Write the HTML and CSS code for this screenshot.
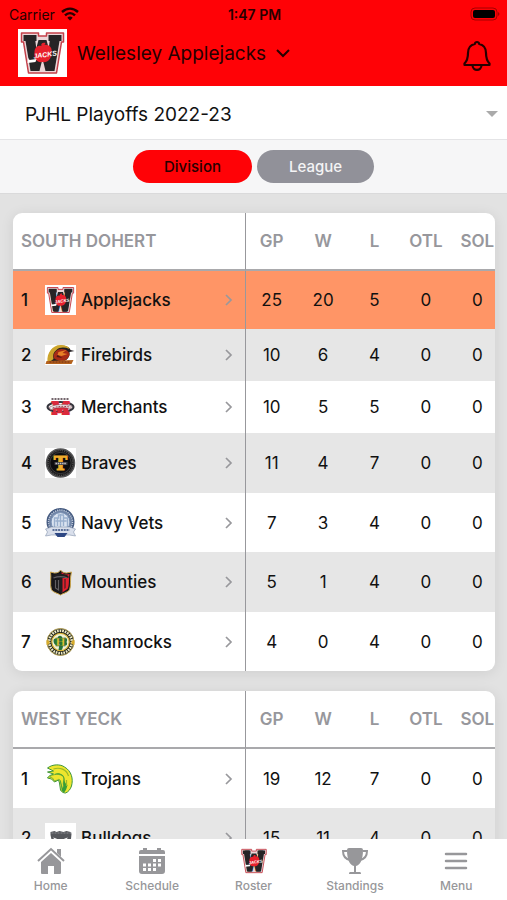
FILE: index.html
```html
<!DOCTYPE html>
<html lang="en">
<head>
    <meta charset="UTF-8">
    <meta name="viewport" content="width=device-width, initial-scale=1">
    <title>Wellesley Applejacks - Roster</title>
    <link rel="stylesheet" href="styles.css">
</head>
<body>
<!-- shared team logos -->
<svg class="sprite" aria-hidden="true">
    <symbol id="jacks" viewBox="0 0 48 48">
        <path d="M3 4h17v3h8V4h17v9h-2l-5 31H10L5 13H3z" fill="#ecd6d8" stroke="#c4404a" stroke-width="1.500" stroke-linejoin="round"/>
        <path d="M5 6h13v6H5zM30 6h13v6H30zM7 12h9l4 30h-8zM32 12h9l-5 30h-8zM20 11h8l3 11H17z" fill="#262426"/>
        <text x="24" y="41" fill="#262426" stroke="#262426" stroke-width="2" font-family="Liberation Mono" font-weight="bold" font-size="50" text-anchor="middle">W</text>
        <path d="M23 17c-1-2 1-4 4-3l-1 2c5-1 8 3 7 8 0 6-4 10-9 9-6 1-9-4-8-10 0-4 3-7 7-6z" fill="#e8202c"/>
        <path d="M10 29l1 2 7-1-1 3-8 1z" fill="#fff"/>
        <text x="27" y="28" fill="#fff" font-family="Liberation Sans" font-weight="bold" font-style="italic" font-size="7" text-anchor="middle" transform="rotate(-8 27 28)">JACKS</text>
    </symbol>
    <symbol id="firebirds" viewBox="0 0 30 20">
        <path d="M3 16C2 10 5 2 14 1c6-1 10 1 11 4l4 1-5 1c1 5-3 9-8 10z" fill="#211d20"/>
        <path d="M2 17C1 8 7 0 15 0c4 0 8 1 9 4-5-2-10-2-13 1-3 2-4 5-3 9l-4 3z" fill="#cda52c"/>
        <path d="M8 12c0-5 4-8 8-8 5 0 8 3 8 6-1 3-4 6-8 6-4-1-7-1-8-4z" fill="#a72b16"/>
        <path d="M13 7l8-2-4 3 5 1-6 2-4-1z" fill="#e78127"/>
        <path d="M12 10l5 3-6-1z" fill="#4e1714"/>
        <path d="M1 16l27-1-2 4H0z" fill="#b3611c"/>
        <path d="M4 17h21" stroke="#702b17" stroke-dasharray="2 1"/>
    </symbol>
    <symbol id="merchants" viewBox="0 0 30 20">
        <ellipse cx="15" cy="10" rx="13" ry="5" fill="none" stroke="#34343c" stroke-width="2"/>
        <text x="15" y="17" fill="#db2a3b" stroke="#db2a3b" stroke-width="2" font-family="DejaVu Serif" font-weight="bold" font-size="16" text-anchor="middle">M</text>
        <path d="M6 2h18" stroke="#45333c" stroke-width="1.500" stroke-dasharray="2 1"/>
        <path d="M4 10c7-3 16-3 22-1l-1 3c-6-2-14-2-20 1z" fill="#eee" stroke="#7d3a44" stroke-width=".5"/>
        <path d="M7 11c6-2 11-2 17-1" stroke="#9e4450" fill="none" stroke-width="1" stroke-dasharray="2 1"/>
    </symbol>
    <symbol id="braves" viewBox="0 0 30 30">
        <circle cx="15" cy="15" r="14" fill="#1b1a1b" stroke="#555556" stroke-width="1.500"/>
        <circle cx="15" cy="15" r="12.400" fill="none" stroke="#666" stroke-width="1" stroke-dasharray="1.200 1"/>
        <circle cx="15" cy="15" r="10.600" fill="#0d0d0f" stroke="#515153" stroke-width=".6"/>
        <text x="15" y="22" fill="#efab2d" stroke="#efab2d" font-family="DejaVu Serif" font-weight="bold" font-size="18" text-anchor="middle">T</text>
        <path d="M9 14h13v3H9z" fill="#413f43"/>
        <path d="M10 15.500h11" stroke="#c3c3c7" stroke-width="1.500" stroke-dasharray="1.500 .7"/>
    </symbol>
    <symbol id="navyvets" viewBox="0 0 30 30">
        <circle cx="15" cy="14" r="13" fill="#7185a6" stroke="#43597f" stroke-width="2"/>
        <circle cx="15" cy="14" r="12" fill="none" stroke="#cad3e2" stroke-width="1.400" stroke-dasharray="1 1.200"/>
        <circle cx="15" cy="14" r="9.400" fill="#dbe4f1" stroke="#7a91b5"/>
        <path d="M9 19V10h4V7h5v3h4v9M15 6v14M10 13h11M12 10v8M18 10v8" stroke="#99afcd" stroke-width="1.400" fill="none"/>
        <path d="M0 21l6-2h18l6 2-2 3 2 4-6-1H6l-6 1 2-4z" fill="#d9dfeb" stroke="#8494ad" stroke-width=".6"/>
        <path d="M7 22h17" stroke="#5a6f98" stroke-width="2.200" stroke-dasharray="2 .8"/>
        <path d="M9 25h13l-3 4h-7z" fill="#2d4783"/>
    </symbol>
    <symbol id="mounties" viewBox="0 0 30 30">
        <path d="M5 5l4 1c3 0 5-1 6-3 1 2 4 3 6 3l5-1c-2 7 0 13-2 18-3 3-6 3-9 5-3-2-6-2-9-5C4 17 6 11 5 5z" fill="#18171a" stroke="#c8a34c"/>
        <path d="M16 5c2 2 5 3 8 2-1 6 0 12-2 15l-6 4z" fill="#df202d"/>
        <path d="M7 9c6-3 11-3 16 0v2H7zM14 11h3v15l-3-1zM19 12h1v9l-1 1z" fill="#211e20"/>
        <path d="M8 11c5-2 9-2 14 0M10 13v8l3 2V13" fill="none" stroke="#615e61" stroke-width="1.200"/>
    </symbol>
    <symbol id="shamrocks" viewBox="0 0 30 30">
        <circle cx="15" cy="15" r="13.500" fill="#171c19" stroke="#b9a558"/>
        <circle cx="15" cy="15" r="11.300" fill="none" stroke="#eee9c2" stroke-width="2.600" stroke-dasharray="1.700 .9"/>
        <circle cx="15" cy="15" r="8.700" fill="#f3f1d6" stroke="#d6b237" stroke-width="1.200"/>
        <path d="M8 14c0-3 3-3 4-1-1-5 5-6 5-1 3-3 6 0 4 3 2 3-1 5-4 2 1 3 0 5-1 6h-3l1-6c-3 3-6 0-6-3z" fill="#26743b"/>
        <text x="15" y="19" fill="#e5ca35" stroke="#285c32" stroke-width=".4" font-family="DejaVu Serif" font-weight="bold" font-size="11" text-anchor="middle">H</text>
        <path d="M1 13l3 1v3l-3 1zM29 13l-3 1v3l3 1z" fill="#d7ab2a"/>
    </symbol>
    <symbol id="trojans" viewBox="0 0 30 30">
        <path d="M2 4C7 0 15 0 19 3c7 4 9 12 7 19-1 3-3 6-6 7-2 0-4-1-5-3l-1-7-1-3-4 2-3-3-4-1c1-2 3-3 6-4L2 8l6-1z" fill="#eee52e" stroke="#3d963d" stroke-width="1"/>
        <path d="M9 10c5-2 10 1 10 5 0 3 1 5 3 6-1 4-2 6-3 7-3 0-3-2-3-4l-2-9z" fill="#369f38"/>
        <path d="M4 13c3-3 11-4 14 0 1 3-1 5 0 9l-1 3-2-8c-1-2-2-2-3-1l-3 1-2-3z" fill="#eee52e" stroke="#3d963d" stroke-width=".6"/>
        <path d="M8 5c6-2 13 0 15 7M21 16v6" fill="none" stroke="#9ab827" stroke-width="1.200"/>
    </symbol>
    <symbol id="bulldogs" viewBox="0 0 30 30">
        <path d="M5 12V9l4-1 2 1 3-1 4 1 3-1 4 1 1 2-1 10-9 7-9-7z" fill="#55575c"/>
        <path d="M6 10h20" stroke="#8b8c90" stroke-dasharray="2 1"/>
        <path d="M8 15l5 2M22 15l-5 2M10 21h10" stroke="#fff"/>
    </symbol>
    <symbol id="more" viewBox="0 0 10 14">
        <path d="M2 2l5 5-5 5" fill="none" stroke="#98989c" stroke-width="1.700"/>
    </symbol>
</svg>

<header class="top">
    <div class="status">
        <span class="carrier">Carrier
            <svg width="18" height="14" viewBox="0 0 18 14" aria-hidden="true">
                <path d="M1 5c5-4.500 11-4.500 16 0M4 8.300c3-2.900 7-2.900 10 0" fill="none" stroke="#260000" stroke-width="2.400"/>
                <path d="M6.300 10.700c1.600-1.500 3.800-1.500 5.400 0L9 13.500z" fill="#260000"/>
            </svg>
        </span>
        <time>1:47 PM</time>
        <svg class="battery" width="30" height="14" viewBox="0 0 30 14" aria-hidden="true">
            <rect x="1" y="1" width="26" height="12" rx="4" fill="none" stroke="#a50000" stroke-width="1"/>
            <rect x="3" y="3" width="22" height="8" rx="2"/>
            <path d="M28 5c2 1 2 3 0 4z" fill="#a50000"/>
        </svg>
    </div>
    <div class="team-bar">
        <button class="team-pick" type="button">
            <svg class="badge" viewBox="0 0 48 48" aria-hidden="true"><use href="#jacks"/></svg>
            Wellesley Applejacks
            <svg width="14" height="9" viewBox="0 0 14 9" aria-hidden="true"><path d="M1 1l6 6 6-6" fill="none" stroke="#260000" stroke-width="2"/></svg>
        </button>
        <button class="bell" type="button" aria-label="Notifications">
            <svg width="28" height="32" viewBox="0 0 28 32" fill="none" stroke="#260000" stroke-width="2.200" stroke-linejoin="round" aria-hidden="true">
                <path d="M14 2c-1.500 0-2 1-2.200 2C7 5 5 9 5 13c0 6-1 8-3.500 10.500V25h25v-1.500C24 21 23 19 23 13c0-4-2-8-6.800-9C16 3 15.500 2 14 2z"/>
                <path d="M9.500 25c0 6.500 9 6.500 9 0"/>
            </svg>
        </button>
    </div>
</header>

<div class="season">
    <select aria-label="Season">
        <option>PJHL Playoffs 2022-23</option>
    </select>
</div>

<div class="switch">
    <button class="on" type="button">Division</button>
    <button type="button">League</button>
</div>

<main>
    <section class="card">
        <table>
            <thead>
                <tr><th class="name">SOUTH DOHERT</th><th>GP</th><th>W</th><th>L</th><th>OTL</th><th>SOL</th></tr>
            </thead>
            <tbody>
                <tr class="mine"><td class="name"><a href="#"><span>1</span><svg class="logo boxed"><use href="#jacks"/></svg><b>Applejacks</b><svg class="more"><use href="#more"/></svg></a></td><td>25</td><td>20</td><td>5</td><td>0</td><td>0</td></tr>
                <tr class="short"><td class="name"><a href="#"><span>2</span><svg class="logo flat boxed"><use href="#firebirds"/></svg><b>Firebirds</b><svg class="more"><use href="#more"/></svg></a></td><td>10</td><td>6</td><td>4</td><td>0</td><td>0</td></tr>
                <tr class="short"><td class="name"><a href="#"><span>3</span><svg class="logo flat"><use href="#merchants"/></svg><b>Merchants</b><svg class="more"><use href="#more"/></svg></a></td><td>10</td><td>5</td><td>5</td><td>0</td><td>0</td></tr>
                <tr><td class="name"><a href="#"><span>4</span><svg class="logo boxed"><use href="#braves"/></svg><b>Braves</b><svg class="more"><use href="#more"/></svg></a></td><td>11</td><td>4</td><td>7</td><td>0</td><td>0</td></tr>
                <tr><td class="name"><a href="#"><span>5</span><svg class="logo"><use href="#navyvets"/></svg><b>Navy Vets</b><svg class="more"><use href="#more"/></svg></a></td><td>7</td><td>3</td><td>4</td><td>0</td><td>0</td></tr>
                <tr><td class="name"><a href="#"><span>6</span><svg class="logo"><use href="#mounties"/></svg><b>Mounties</b><svg class="more"><use href="#more"/></svg></a></td><td>5</td><td>1</td><td>4</td><td>0</td><td>0</td></tr>
                <tr><td class="name"><a href="#"><span>7</span><svg class="logo"><use href="#shamrocks"/></svg><b>Shamrocks</b><svg class="more"><use href="#more"/></svg></a></td><td>4</td><td>0</td><td>4</td><td>0</td><td>0</td></tr>
            </tbody>
        </table>
    </section>
    <section class="card">
        <table>
            <thead>
                <tr><th class="name">WEST YECK</th><th>GP</th><th>W</th><th>L</th><th>OTL</th><th>SOL</th></tr>
            </thead>
            <tbody>
                <tr><td class="name"><a href="#"><span>1</span><svg class="logo"><use href="#trojans"/></svg><b>Trojans</b><svg class="more"><use href="#more"/></svg></a></td><td>19</td><td>12</td><td>7</td><td>0</td><td>0</td></tr>
                <tr><td class="name"><a href="#"><span>2</span><svg class="logo boxed"><use href="#bulldogs"/></svg><b>Bulldogs</b><svg class="more"><use href="#more"/></svg></a></td><td>15</td><td>11</td><td>4</td><td>0</td><td>0</td></tr>
            </tbody>
        </table>
    </section>
</main>

<nav class="tabs">
    <a href="#">
        <svg viewBox="0 0 28 28" aria-hidden="true">
            <path d="M1 14L14 2l13 12" fill="none" stroke="#97979a" stroke-width="2"/>
            <path d="M20 2h4v8l-4-4zM4 15L14 6l10 9v11q0 1-1 1h-6v-8h-6v8H5q-1 0-1-1z"/>
        </svg>
        Home
    </a>
    <a href="#">
        <svg viewBox="0 0 28 28" aria-hidden="true">
            <path d="M1 7V5q0-2 2-2h2V1h4v2h10V1h4v2h2q2 0 2 2v2zM1 9h26v15q0 3-3 3H4q-3 0-3-3z"/>
            <path d="M15 12h3v3h-3zM20 12h3v3h-3zM5 16.500h3v3H5zM10 16.500h3v3h-3zM15 16.500h3v3h-3zM20 16.500h3v3h-3zM5 21h3v3H5zM10 21h3v3h-3zM15 21h3v3h-3z" fill="#fff"/>
        </svg>
        Schedule
    </a>
    <a href="#">
        <svg viewBox="0 0 48 48" aria-hidden="true"><use href="#jacks"/></svg>
        Roster
    </a>
    <a href="#">
        <svg viewBox="0 0 28 28" aria-hidden="true">
            <path d="M6 4H2c0 5 2 8 7 9M22 4h4c0 5-2 8-7 9" fill="none" stroke="#97979a" stroke-width="2"/>
            <path d="M6 3q0-2 2-2h12q2 0 2 2c0 10-3 15-7 16v6h4q1 0 1 2H8q0-2 1-2h4v-6C9 18 6 13 6 3z"/>
        </svg>
        Standings
    </a>
    <a href="#">
        <svg viewBox="0 0 28 28" aria-hidden="true"><path d="M4 7h20M4 14h20M4 21h20" stroke="#97979a" stroke-width="2.500" stroke-linecap="round"/></svg>
        Menu
    </a>
</nav>
</body>
</html>
```
FILE: styles.css
```css
* { margin: 0; padding: 0; box-sizing: border-box; }
body { display: flex; flex-direction: column; height: 100vh; overflow: hidden; background: #e2e2e2; color: #111; font-family: Inter, "Liberation Sans", sans-serif; font-size: 16px; }
button, select { font: inherit; border: none; background: none; color: inherit; }
a { color: inherit; text-decoration: none; }
svg { display: block; flex: none; }
.sprite { position: absolute; width: 0; height: 0; }

/* red header */
.top { flex: none; background: #ff0206; color: #260000; }
.status { display: grid; grid-template-columns: 1fr auto 1fr; align-items: center; height: 28px; padding: 0 7px 0 9px; font-size: 14px; }
.status time { font-weight: 600; }
.carrier { display: flex; align-items: center; gap: 6px; }
.battery { justify-self: end; }
.team-bar { display: flex; align-items: center; justify-content: space-between; height: 58px; padding: 0 16px 8px 18px; }
.team-pick { display: flex; align-items: center; gap: 10px; font-size: 19px; }
.badge { width: 49px; height: 48px; background: #fff; }
.bell { padding-top: 6px; }

.season { flex: none; height: 54px; background: #fff; border-bottom: 1px solid #e4e4e6; display: flex; align-items: center; position: relative; }
.season select { appearance: none; width: 100%; height: 100%; padding: 3px 25px 0; font-size: 19px; }
.season::after { content: ""; position: absolute; right: 9px; top: 25px; border: 6px solid transparent; border-top-color: #aaa; border-bottom: none; pointer-events: none; }

.switch { flex: none; display: flex; justify-content: center; gap: 5px; height: 54px; padding: 10px 0; background: #f6f6f7; border-bottom: 1px solid #dadadb; }
.switch button { width: 117px; height: 33px; border-radius: 17px; background: #919199; color: #f4f4f5; font-size: 15px; font-weight: 500; }
.switch .on { width: 119px; background: #ff0206; color: #260000; }

/* standings */
main { flex: 1; min-height: 0; overflow: auto; scrollbar-width: none; padding: 19px 12px 20px 13px; }
.card { overflow: hidden; background: #fff; border-radius: 9px; margin-bottom: 20px; box-shadow: 0 2px 14px rgba(0,0,0,.09); }
/* the last stat column runs a little past the card */
table { width: calc(100% + 8px); table-layout: fixed; border-collapse: separate; border-spacing: 0; font-size: 17px; }
th { height: 58px; border-bottom: 2px solid #a9a9ac; color: #97979c; font-weight: 600; text-align: center; }
td { height: 59px; text-align: center; }
tbody tr:nth-child(even) { background: #e6e6e6; }
tbody tr:nth-child(even) td { height: 60px; }
tbody .mine { background: #ff9566; }
tbody .mine td { height: 58px; }
tbody .short td, tbody .short:nth-child(even) td { height: 52px; }
.name { width: 233px; padding-left: 8px; border-right: 1px solid #98989c; text-align: left; }
.name a { display: flex; align-items: center; padding-right: 11px; font-weight: 500; }
.name span { width: 24px; }
.name b { flex: 1; padding-left: 5px; font-weight: 500; }
.logo { width: 31px; height: 30px; }
.flat { height: 20px; }
.boxed { background: #fff; }
.more { width: 10px; height: 14px; }

/* bottom tabs */
.tabs { flex: none; display: flex; height: 61px; padding-top: 8px; background: #fff; }
.tabs a { flex: 1; display: flex; flex-direction: column; align-items: center; gap: 4px; color: #97979a; font-size: 12px; font-weight: 500; line-height: 14px; }
.tabs svg { width: 28px; height: 28px; fill: #97979a; }
```
